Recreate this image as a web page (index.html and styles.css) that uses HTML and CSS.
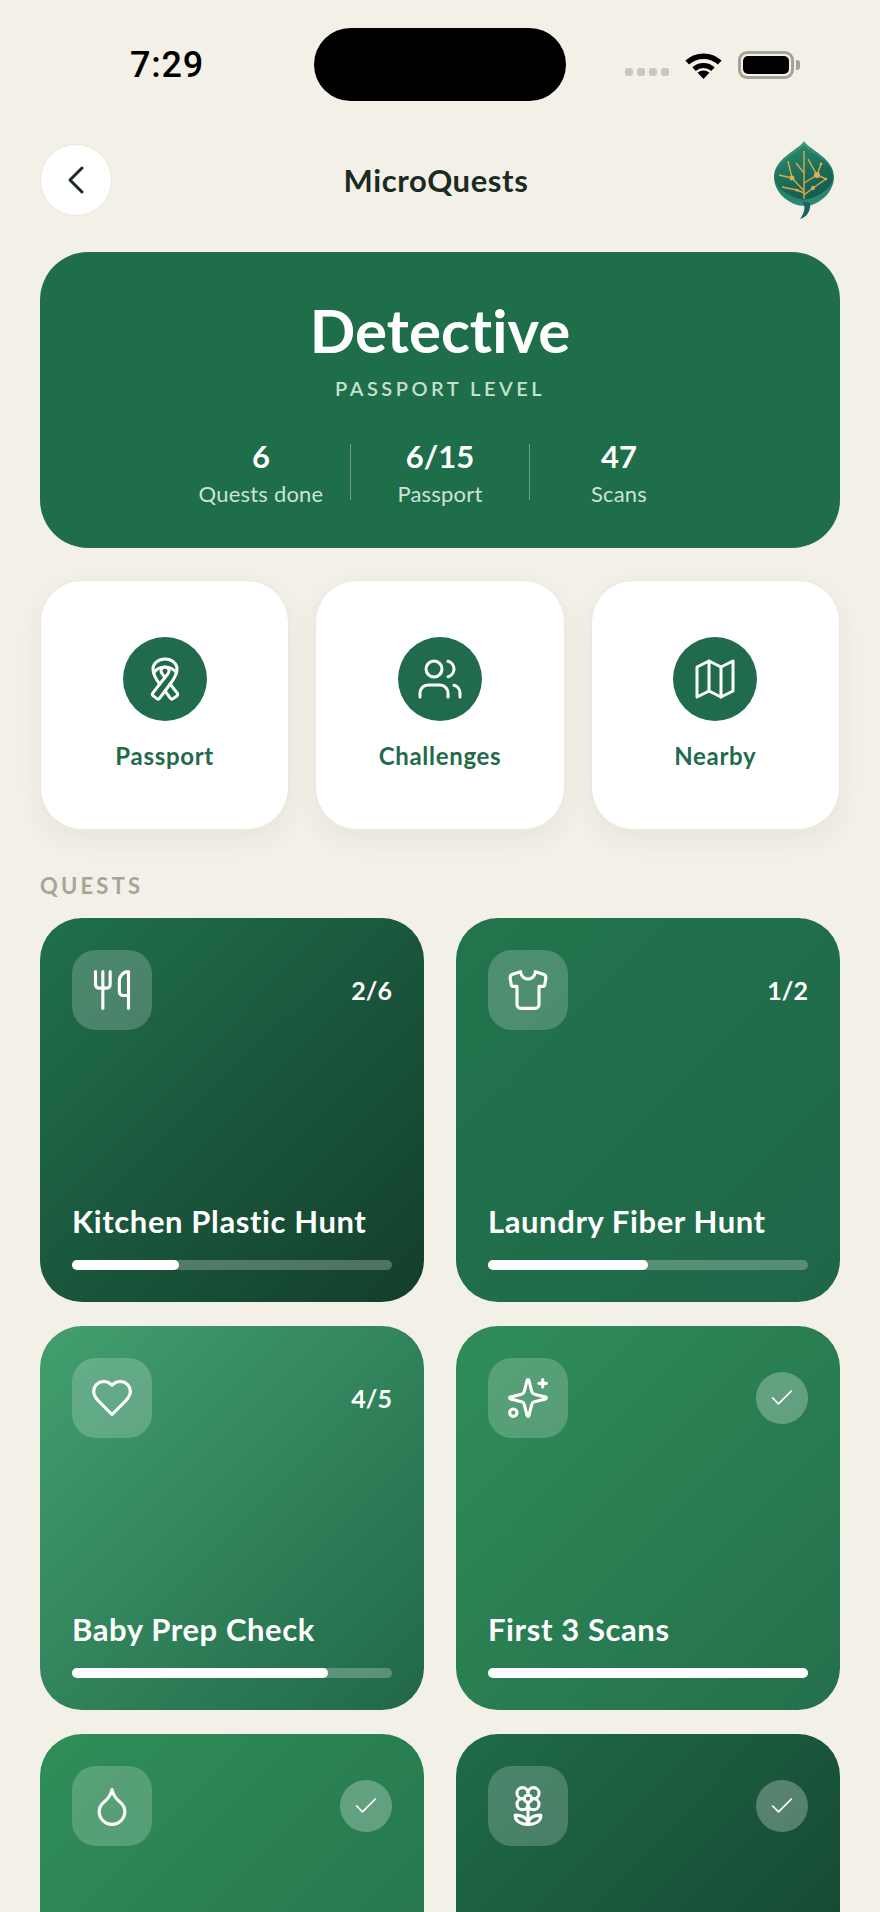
FILE: index.html
```html
<!DOCTYPE html>
<html>
<head>
    <meta charset="utf-8">
    <title>MicroQuests</title>
    <link rel="stylesheet" href="styles.css">
</head>
<body>
    <div class="status">
        <div class="status-time">7:29</div>
        <div class="island"></div>
        <div class="status-right">
            <div class="dots"><span></span><span></span><span></span><span></span></div>
            <svg class="wifi" viewBox="0 0 39 28">
                <path d="M3.2 11.6a24 24 0 0 1 32.6 0" fill="none" stroke="#000" stroke-width="5.4"/>
                <path d="M10 18.2a14 14 0 0 1 19 0" fill="none" stroke="#000" stroke-width="5"/>
                <path d="M19.5 28 13.6 21.8a8.6 8.6 0 0 1 11.8 0z" fill="#000"/>
            </svg>
            <div class="battery"><div class="battery-fill"></div></div>
        </div>
    </div>

    <div class="header">
        <div class="back">
            <svg width="20" height="30" viewBox="0 0 20 30" fill="none" stroke="#1b2a22" stroke-width="3" stroke-linecap="round" stroke-linejoin="round"><path d="M16 3 4 15l12 12"/></svg>
        </div>
        <div class="title">MicroQuests</div>
        <svg class="leaf" viewBox="0 0 60 78">
            <defs>
                <linearGradient id="leafrim" x1="0.4" y1="0" x2="0.6" y2="1">
                    <stop offset="0" stop-color="#3f9c7c"/>
                    <stop offset="0.5" stop-color="#1f7a64"/>
                    <stop offset="1" stop-color="#2f8a76"/>
                </linearGradient>
                <linearGradient id="leafbody" x1="0.3" y1="0" x2="0.7" y2="1">
                    <stop offset="0" stop-color="#2a8a6c"/>
                    <stop offset="0.6" stop-color="#1a6a58"/>
                    <stop offset="1" stop-color="#155a4e"/>
                </linearGradient>
            </defs>
            <path d="M30 0C34 8 60 17 60 36 60 52 44 65 31 65 16 65 0 52 0 36 0 17 26 8 30 0z" fill="url(#leafrim)"/>
            <path d="M30 4C35 12 59 20 59 36 59 47 45 56 30 59 15 56 1 47 1 36 1 20 25 12 30 4z" fill="url(#leafbody)"/>
            <path d="M28 60C32 65 31 71 26 78 33 76 37 70 36 62z" fill="#17645a"/>
            <g fill="none" stroke="#d9a94e" stroke-width="1.4">
                <path d="M30 10V58"/>
                <path d="M30 50 18 37 14 20"/>
                <path d="M30 42 43 34 34 18"/>
                <path d="M30 52 23 49 8 46"/>
                <path d="M30 54 39 47 52 38 43 34 47 23"/>
                <path d="M18 37 5 34M30 32 22 22"/>
            </g>
            <g fill="#e0ae52">
                <circle cx="18" cy="37" r="2.5"/>
                <circle cx="43" cy="34" r="3"/>
                <circle cx="39" cy="47" r="2"/>
                <circle cx="23" cy="49" r="1.5"/>
                <circle cx="47" cy="23" r="1.4"/>
                <circle cx="52" cy="38" r="1.3"/>
            </g>
        </svg>
    </div>

    <div class="hero">
        <div class="hero-name">Detective</div>
        <div class="hero-sub">PASSPORT LEVEL</div>
        <div class="stats">
            <div class="stat"><div class="stat-num">6</div><div class="stat-label">Quests done</div></div>
            <div class="stat stat-mid"><div class="stat-num">6/15</div><div class="stat-label">Passport</div></div>
            <div class="stat"><div class="stat-num">47</div><div class="stat-label">Scans</div></div>
        </div>
    </div>

    <div class="tiles">
        <div class="tile">
            <div class="tile-icon">
                <svg class="line-icon" width="48" height="48" viewBox="0 0 24 24">
                    <path d="M12 11.22C11 9.997 10 9 10 8a2 2 0 0 1 4 0c0 1-.998 2.002-2.01 3.22"/>
                    <path d="m12 18 2.57-3.5"/>
                    <path d="M6.243 9.016a7 7 0 0 1 11.507-.009"/>
                    <path d="M9.35 14.53 12 11.22"/>
                    <path d="M9.35 14.53C7.728 12.246 6 10.221 6 7a6 5 0 0 1 12 0c-.005 3.22-1.778 5.235-3.43 7.5l3.557 4.527a1 1 0 0 1-.203 1.43l-1.894 1.36a1 1 0 0 1-1.384-.215L12 18l-2.679 3.593a1 1 0 0 1-1.39.213l-1.865-1.353a1 1 0 0 1-.203-1.422z"/>
                </svg>
            </div>
            <div class="tile-label">Passport</div>
        </div>
        <div class="tile">
            <div class="tile-icon">
                <svg class="line-icon" width="48" height="48" viewBox="0 0 24 24">
                    <circle cx="9" cy="7" r="4"/>
                    <path d="M16 3.128a4 4 0 0 1 0 7.744"/>
                    <path d="M16 21v-2a4 4 0 0 0-4-4H6a4 4 0 0 0-4 4v2"/>
                    <path d="M22 21v-2a4 4 0 0 0-3-3.87"/>
                </svg>
            </div>
            <div class="tile-label">Challenges</div>
        </div>
        <div class="tile">
            <div class="tile-icon">
                <svg class="line-icon" width="48" height="48" viewBox="0 0 24 24">
                    <path d="M3 6 9 3l6 3 6-3v15l-6 3-6-3-6 3z"/>
                    <path d="M9 3v15"/>
                    <path d="M15 6v15"/>
                </svg>
            </div>
            <div class="tile-label">Nearby</div>
        </div>
    </div>

    <div class="section-label">QUESTS</div>

    <div class="quests">
        <div class="quest quest-kitchen">
            <div class="quest-top">
                <div class="quest-icon">
                    <svg class="line-icon" width="44" height="44" viewBox="0 0 24 24">
                        <path d="M3 2v7c0 1.1.9 2 2 2h4a2 2 0 0 0 2-2V2"/>
                        <path d="M7 2v20"/>
                        <path d="M21 15V2a5 5 0 0 0-5 5v6c0 1.1.9 2 2 2h3Zm0 0v7"/>
                    </svg>
                </div>
                <div class="quest-count">2/6</div>
            </div>
            <div class="quest-name">Kitchen Plastic Hunt</div>
            <div class="bar"><div class="bar-fill" style="width: 33.3%"></div></div>
        </div>
        <div class="quest quest-laundry">
            <div class="quest-top">
                <div class="quest-icon">
                    <svg class="line-icon" width="44" height="44" viewBox="0 0 24 24">
                        <path d="M20.38 3.46 16 2a4 4 0 0 1-8 0L3.62 3.46a2 2 0 0 0-1.34 2.23l.58 3.47a1 1 0 0 0 .99.84H6v10c0 1.1.9 2 2 2h8a2 2 0 0 0 2-2V10h2.15a1 1 0 0 0 .99-.84l.58-3.47a2 2 0 0 0-1.34-2.23z"/>
                    </svg>
                </div>
                <div class="quest-count">1/2</div>
            </div>
            <div class="quest-name">Laundry Fiber Hunt</div>
            <div class="bar"><div class="bar-fill" style="width: 50%"></div></div>
        </div>
        <div class="quest quest-baby">
            <div class="quest-top">
                <div class="quest-icon">
                    <svg class="line-icon" width="44" height="44" viewBox="0 0 24 24">
                        <path d="M19 14c1.49-1.46 3-3.21 3-5.5A5.5 5.5 0 0 0 16.5 3c-1.76 0-3 .5-4.5 2-1.5-1.5-2.74-2-4.5-2A5.5 5.5 0 0 0 2 8.5c0 2.3 1.5 4.05 3 5.5l7 7Z"/>
                    </svg>
                </div>
                <div class="quest-count">4/5</div>
            </div>
            <div class="quest-name">Baby Prep Check</div>
            <div class="bar"><div class="bar-fill" style="width: 80%"></div></div>
        </div>
        <div class="quest quest-scans">
            <div class="quest-top">
                <div class="quest-icon">
                    <svg class="line-icon" width="44" height="44" viewBox="0 0 24 24">
                        <path d="M9.937 15.5A2 2 0 0 0 8.5 14.063l-6.135-1.582a.5.5 0 0 1 0-.962L8.5 9.936A2 2 0 0 0 9.937 8.5l1.582-6.135a.5.5 0 0 1 .963 0L14.063 8.5A2 2 0 0 0 15.5 9.937l6.135 1.581a.5.5 0 0 1 0 .964L15.5 14.063a2 2 0 0 0-1.437 1.437l-1.582 6.135a.5.5 0 0 1-.963 0z"/>
                        <path d="M20 2v4"/>
                        <path d="M22 4h-4"/>
                        <circle cx="4" cy="20" r="2"/>
                    </svg>
                </div>
                <div class="quest-done">
                    <svg class="line-icon" width="28" height="28" viewBox="0 0 24 24"><path d="M20 6 9 17l-5-5"/></svg>
                </div>
            </div>
            <div class="quest-name">First 3 Scans</div>
            <div class="bar"><div class="bar-fill" style="width: 100%"></div></div>
        </div>
        <div class="quest quest-water">
            <div class="quest-top">
                <div class="quest-icon">
                    <svg class="line-icon" width="44" height="44" viewBox="0 0 24 24">
                        <path d="M12 22a7 7 0 0 0 7-7c0-2-1-3.9-3-5.5s-3.5-4-4-6.5c-.5 2.5-2 4.9-4 6.5C6 11.1 5 13 5 15a7 7 0 0 0 7 7z"/>
                    </svg>
                </div>
                <div class="quest-done">
                    <svg class="line-icon" width="28" height="28" viewBox="0 0 24 24"><path d="M20 6 9 17l-5-5"/></svg>
                </div>
            </div>
        </div>
        <div class="quest quest-garden">
            <div class="quest-top">
                <div class="quest-icon">
                    <svg class="line-icon" width="44" height="44" viewBox="0 0 24 24">
                        <path d="M12 5a3 3 0 1 1 3 3m-3-3a3 3 0 1 0-3 3m3-3v1M9 8a3 3 0 1 0 3 3M9 8h1m5 0a3 3 0 1 1-3 3m3-3h-1m-2 3v-1"/>
                        <circle cx="12" cy="8" r="2"/>
                        <path d="M12 10v12"/>
                        <path d="M12 22c4.2 0 7-1.667 7-5-4.2 0-7 1.667-7 5Z"/>
                        <path d="M12 22c-4.2 0-7-1.667-7-5 4.2 0 7 1.667 7 5Z"/>
                    </svg>
                </div>
                <div class="quest-done">
                    <svg class="line-icon" width="28" height="28" viewBox="0 0 24 24"><path d="M20 6 9 17l-5-5"/></svg>
                </div>
            </div>
        </div>
    </div>
</body>
</html>
```

FILE: styles.css
```css
html {
    height: 1912px;
    overflow: hidden;
    background: #f3f0e8;
}
body {
    margin: 0;
    height: 1912px;
    overflow: hidden;
    padding: 0 40px;
    box-sizing: border-box;
    font-family: Lato, "Noto Sans", sans-serif;
    font-variant-ligatures: none;
    background: #f3f0e8;
    color: #1b2a22;
}

/* status bar */
.status {
    display: flex;
    align-items: center;
    height: 73px;
    padding-top: 28px;
}
.status-time {
    width: 274px;
    padding-left: 90px;
    box-sizing: border-box;
    font-family: Roboto, sans-serif;
    font-size: 36px;
    font-weight: 500;
    letter-spacing: 0.8px;
    color: #000;
}
.island {
    width: 252px;
    height: 73px;
    border-radius: 37px;
    background: #000;
}
.status-right {
    display: flex;
    align-items: center;
    padding-left: 59px;
}
.dots {
    display: flex;
    gap: 4px;
    margin-top: 14px;
    margin-right: 15px;
}
.dots span {
    width: 8px;
    height: 8px;
    border-radius: 3px;
    background: #c9c6be;
}
.wifi {
    width: 39px;
    height: 28px;
    margin-right: 15px;
}
.battery {
    position: relative;
    width: 56px;
    height: 28px;
    box-sizing: border-box;
    border: 3px solid #a5a298;
    border-radius: 9px;
    padding: 2px;
}
.battery::after {
    content: "";
    position: absolute;
    right: -9px;
    top: 6px;
    width: 4px;
    height: 10px;
    border-radius: 0 3px 3px 0;
    background: #a5a298;
}
.battery-fill {
    height: 100%;
    border-radius: 5px;
    background: #000;
}

/* header */
.header {
    display: grid;
    grid-template-columns: 72px 1fr 72px;
    grid-template-rows: 72px;
    align-items: center;
    height: 72px;
    margin-top: 43px;
}
.back {
    display: flex;
    align-items: center;
    justify-content: center;
    width: 72px;
    height: 72px;
    box-sizing: border-box;
    border-radius: 50%;
    border: 1.5px solid #ebe8dc;
    background: #fff;
}
.title {
    padding-right: 8px;
    text-align: center;
    font-size: 31px;
    font-weight: 700;
    letter-spacing: 0.6px;
}
.leaf {
    width: 60px;
    height: 78px;
    justify-self: center;
}

/* level card */
.hero {
    display: flex;
    flex-direction: column;
    align-items: center;
    height: 296px;
    box-sizing: border-box;
    margin-top: 36px;
    padding-top: 42px;
    border-radius: 48px;
    background: #1f6e4a;
    color: #fff;
}
.hero-name {
    font-size: 60px;
    font-weight: 700;
    line-height: 72px;
}
.hero-sub {
    margin-top: 9px;
    font-size: 20px;
    font-weight: 600;
    line-height: 26px;
    letter-spacing: 3.5px;
    color: #c5e0d0;
}
.stats {
    display: flex;
    margin-top: 43px;
}
.stat {
    width: 178px;
    height: 56px;
    text-align: center;
}
.stat-mid {
    border-left: 1px solid rgba(255, 255, 255, 0.35);
    border-right: 1px solid rgba(255, 255, 255, 0.35);
}
.stat-num {
    margin-top: -6px;
    font-size: 31px;
    font-weight: 700;
    line-height: 36px;
}
.stat-label {
    margin-top: 7px;
    font-size: 22px;
    line-height: 26px;
    letter-spacing: 0.2px;
    color: #cbe3d5;
}

/* shortcuts */
.tiles {
    display: grid;
    grid-template-columns: repeat(3, 1fr);
    gap: 26px;
    margin-top: 32px;
}
.tile {
    display: flex;
    flex-direction: column;
    align-items: center;
    height: 250px;
    box-sizing: border-box;
    padding-top: 56px;
    border: 1.5px solid #ebe8dc;
    border-radius: 42px;
    background: #fff;
    box-shadow: 0 10px 28px rgba(60, 55, 30, 0.06);
}
.tile-icon {
    display: flex;
    align-items: center;
    justify-content: center;
    width: 84px;
    height: 84px;
    border-radius: 50%;
    background: #1f6b4b;
}
.tile-label {
    margin-top: 20px;
    font-size: 24px;
    font-weight: 700;
    line-height: 30px;
    letter-spacing: 0.7px;
    color: #1f6b4b;
}
.line-icon {
    fill: none;
    stroke: #fff;
    stroke-width: 1.5;
    stroke-linecap: round;
    stroke-linejoin: round;
}

/* quests */
.section-label {
    margin-top: 42px;
    margin-bottom: 18px;
    font-size: 22px;
    font-weight: 700;
    line-height: 28px;
    letter-spacing: 3.2px;
    color: #a8a497;
}
.quests {
    display: grid;
    grid-template-columns: 384px 384px;
    column-gap: 32px;
    row-gap: 24px;
}
.quest {
    display: flex;
    flex-direction: column;
    height: 384px;
    box-sizing: border-box;
    padding: 32px;
    border-radius: 42px;
    color: #fff;
}
.quest-kitchen {
    background: linear-gradient(135deg, #20704c, #133e2c);
}
.quest-laundry {
    background: linear-gradient(135deg, #21754c, #1f6649);
}
.quest-baby {
    background: linear-gradient(135deg, #429f6f, #216848);
}
.quest-scans {
    background: linear-gradient(135deg, #2f8d58, #246f4c);
}
.quest-water {
    background: linear-gradient(135deg, #2f8e58, #246f4c);
}
.quest-garden {
    background: linear-gradient(135deg, #1f6b48, #133f2c);
}
.quest-top {
    display: flex;
    align-items: center;
    justify-content: space-between;
}
.quest-icon {
    display: flex;
    align-items: center;
    justify-content: center;
    width: 80px;
    height: 80px;
    border-radius: 24px;
    background: rgba(255, 255, 255, 0.2);
}
.quest-icon .line-icon {
    stroke-width: 1.7;
}
.quest-count {
    font-size: 25px;
    font-weight: 700;
}
.quest-done {
    display: flex;
    align-items: center;
    justify-content: center;
    width: 52px;
    height: 52px;
    border-radius: 50%;
    background: rgba(255, 255, 255, 0.27);
}
.quest-name {
    margin-top: auto;
    font-size: 31px;
    font-weight: 700;
    line-height: 38px;
    letter-spacing: 0.6px;
}
.bar {
    height: 10px;
    margin-top: 20px;
    border-radius: 5px;
    background: rgba(255, 255, 255, 0.25);
}
.bar-fill {
    height: 100%;
    border-radius: 5px;
    background: #fff;
}
```
